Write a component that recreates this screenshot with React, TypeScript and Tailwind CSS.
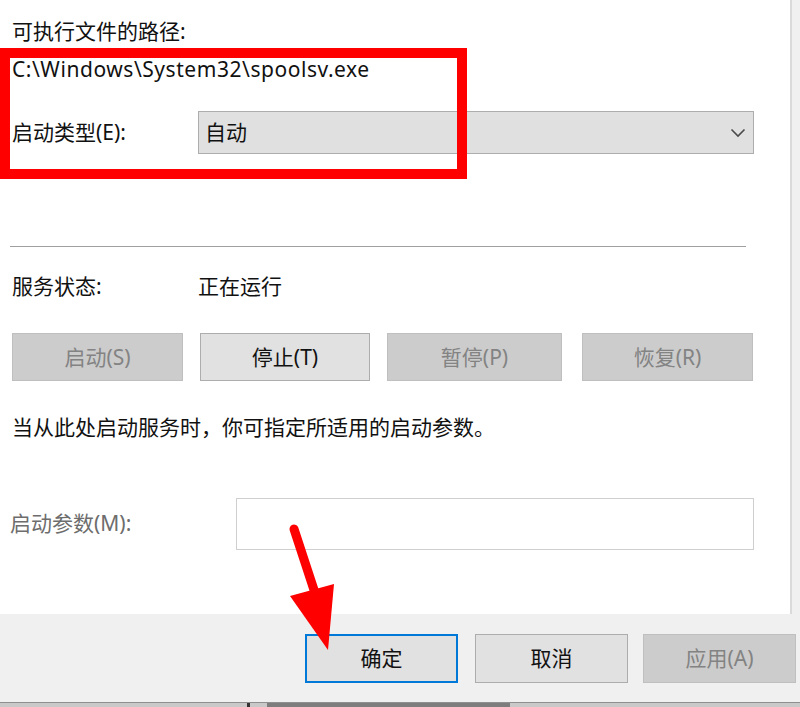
import React from "react";

const font = { fontFamily: '"Noto Sans", "Noto Sans CJK SC", sans-serif' };

function Btn({
  w,
  label,
  disabled,
  primary,
  className = "",
}: {
  w: string;
  label: string;
  disabled?: boolean;
  primary?: boolean;
  className?: string;
}) {
  const base = "h-full flex items-center justify-center text-[21px] leading-none";
  let style = "bg-[#e1e1e1] border border-[#adadad] text-[#111]";
  if (disabled) style = "bg-[#cccccc] border border-[#bfbfbf] text-[#838383]";
  if (primary) style = "bg-[#e1e1e1] border-2 border-[#0078d7] text-[#111]";
  return <div className={`${base} ${style} ${w} ${className}`}>{label}</div>;
}

export default function App() {
  return (
    <div
      className="relative w-[800px] h-[707px] overflow-hidden bg-[#f0f0f0] flex flex-col"
      style={font}
    >
      {/* main white panel */}
      <div className="h-[614px] w-[792px] bg-white border-r-[2px] border-[#dadada] flex flex-col shrink-0">
        <div className="pl-[12px] pt-[12px] h-[52px] flex items-center text-[21px] text-[#111]">
          可执行文件的路径:
        </div>
        <div className="pl-[12px] h-[36px] flex items-center text-[21px] tracking-[0.55px] text-[#111]">
          C:\Windows\System32\spoolsv.exe
        </div>
        <div className="mt-[23px] h-[43px] flex items-center">
          <div className="pl-[12px] w-[198px] text-[21px] text-[#111]">启动类型(E):</div>
          <div className="w-[556px] h-full bg-[#e0e0e0] border border-[#adadad] flex items-center justify-between pl-[6px] pr-[7px]">
            <span className="text-[21px] text-[#111]">自动</span>
            <svg width="16" height="10" viewBox="0 0 16 10">
              <path d="M1.5 1.5 L8 8 L14.5 1.5" fill="none" stroke="#4a4a4a" strokeWidth="1.6" />
            </svg>
          </div>
        </div>
        <div className="mt-[92px] ml-[10px] w-[736px] h-px bg-[#a0a0a0]" />
        <div className="mt-[25px] h-[30px] flex items-center text-[21px] text-[#111]">
          <div className="pl-[12px] w-[198px]">服务状态:</div>
          <div>正在运行</div>
        </div>
        <div className="mt-[31px] h-[48px] flex pl-[12px]">
          <Btn w="w-[171px]" label="启动(S)" disabled />
          <Btn w="w-[170px]" label="停止(T)" className="ml-[17px]" />
          <Btn w="w-[175px]" label="暂停(P)" disabled className="ml-[17px]" />
          <Btn w="w-[171px]" label="恢复(R)" disabled className="ml-[20px]" />
        </div>
        <div className="mt-[33px] h-[28px] pl-[12px] flex items-center text-[21px] text-[#111]">
          当从此处启动服务时，你可指定所适用的启动参数。
        </div>
        <div className="mt-[56px] h-[52px] flex items-center">
          <div className="pl-[10px] w-[236px] text-[21px] text-[#6d6d6d]">启动参数(M):</div>
          <div className="w-[518px] h-full bg-white border border-[#cfcfcf]" />
        </div>
      </div>

      {/* footer */}
      <div className="h-[88px] pt-[20px] flex shrink-0">
        <div className="h-[49px] flex pl-[305px]">
          <Btn w="w-[153px]" label="确定" primary />
          <Btn w="w-[153px]" label="取消" className="ml-[17px]" />
          <Btn w="w-[153px]" label="应用(A)" disabled className="ml-[15px]" />
        </div>
      </div>

      {/* bottom strip */}
      <div className="h-[5px] flex border-t border-[#8f8f8f] bg-[#c9c9c9] shrink-0">
        <div className="w-[247px]" />
        <div className="w-[3px] bg-[#333]" />
        <div className="w-[17px]" />
        <div className="w-[243px] bg-[#7d7d7d]" />
      </div>

      {/* red annotation box */}
      <div className="absolute left-0 top-[48px] w-[467px] h-[131px] border-[10px] border-[#ff0000] pointer-events-none" />

      {/* red arrow */}
      <svg
        className="absolute left-0 top-0 pointer-events-none"
        width="800"
        height="707"
        viewBox="0 0 800 707"
      >
        <line x1="294" y1="529" x2="316" y2="596" stroke="#ff0000" strokeWidth="9" strokeLinecap="round" />
        <polygon points="290,596 334,584 328,650" fill="#ff0000" />
      </svg>
    </div>
  );
}
